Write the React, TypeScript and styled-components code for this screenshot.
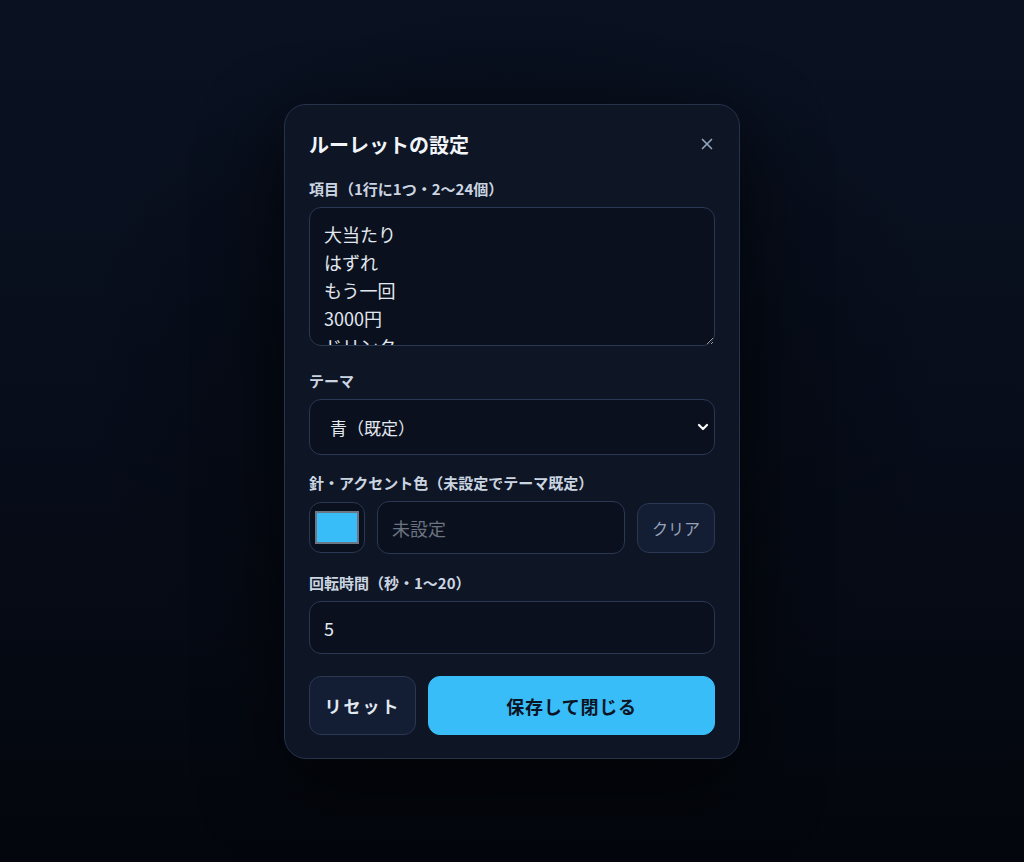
import React, { useState } from 'react';
import styled, { createGlobalStyle } from 'styled-components';
import { X, ChevronDown } from 'lucide-react';

const fontStack = `"Noto Sans CJK JP", "Noto Sans", sans-serif`;

const GlobalStyle = createGlobalStyle`
  html, body {
    margin: 0;
    padding: 0;
    height: 100%;
  }
  body {
    background: #050a14;
    font-family: ${fontStack};
    color: #e2e8f0;
  }
  * {
    text-spacing-trim: space-all;
  }
  #root {
    min-height: 100%;
  }
`;

const Backdrop = styled.div`
  min-height: 862px;
  display: flex;
  justify-content: center;
  align-items: flex-start;
  padding-top: 104px;
  box-sizing: border-box;
  background:
    radial-gradient(ellipse at 50% 45%, rgba(3, 6, 12, 0.9) 0%, rgba(3, 6, 12, 0) 60%),
    linear-gradient(180deg, #0a1222 0%, #070d1a 50%, #03060c 100%);
`;

const Dialog = styled.div`
  width: 456px;
  box-sizing: border-box;
  padding: 22px 24px 23px;
  background: #0e1525;
  border: 1px solid #26334b;
  border-radius: 22px;
  box-shadow: 0 30px 80px rgba(0, 0, 0, 0.65);
`;

const Header = styled.div`
  display: flex;
  align-items: center;
  justify-content: space-between;
  height: 34px;
  margin-bottom: 18px;
`;

const Title = styled.h2`
  margin: 0;
  font-size: 20px;
  font-weight: 700;
  color: #f1f5f9;
`;

const CloseButton = styled.button`
  width: 32px;
  height: 32px;
  margin-right: -8px;
  display: flex;
  align-items: center;
  justify-content: center;
  background: none;
  border: none;
  color: #94a3b8;
  cursor: pointer;
  padding: 0;
`;

const Field = styled.div<{ $gap?: number }>`
  display: flex;
  flex-direction: column;
  gap: 8px;
  margin-bottom: ${(p) => p.$gap ?? 20}px;
`;

const Label = styled.label`
  font-size: 15px;
  line-height: 20px;
  font-weight: 600;
  color: #cbd5e1;
`;

const controlBase = `
  box-sizing: border-box;
  width: 100%;
  background: #0a101d;
  border: 1px solid #2a3853;
  border-radius: 12px;
  color: #e2e8f0;
  font-family: ${fontStack};
  outline: none;
`;

const TextArea = styled.textarea`
  ${controlBase}
  display: block;
  height: 139px;
  padding: 12px 14px;
  font-size: 18px;
  line-height: 28px;
  resize: vertical;
  overflow: hidden;
  margin-bottom: 5px;
`;

const SelectWrap = styled.div`
  position: relative;
`;

const Select = styled.select`
  ${controlBase}
  appearance: none;
  height: 56px;
  padding: 0 20px;
  font-size: 17px;
`;

const Chevron = styled(ChevronDown)`
  position: absolute;
  right: 4px;
  top: 50%;
  transform: translateY(-50%);
  color: #f8fafc;
  pointer-events: none;
`;

const ColorRow = styled.div`
  display: flex;
  align-items: center;
  gap: 12px;
`;

const Swatch = styled.button`
  flex: none;
  width: 56px;
  height: 51px;
  display: flex;
  align-items: center;
  justify-content: center;
  background: #0a101d;
  border: 1px solid #2a3853;
  border-radius: 12px;
  padding: 0;
  cursor: pointer;
`;

const SwatchFill = styled.span<{ $color: string }>`
  width: 44px;
  height: 33px;
  box-sizing: border-box;
  background: ${(p) => p.$color};
  border: 2px solid #6b7785;
`;

const TextInput = styled.input`
  ${controlBase}
  height: 53px;
  padding: 0 14px;
  font-size: 18px;

  &::placeholder {
    color: #6b7280;
  }
`;

const ClearButton = styled.button`
  flex: none;
  width: 78px;
  height: 50px;
  background: #131d33;
  border: 1px solid #2a3853;
  border-radius: 12px;
  color: #94a3b8;
  font-family: inherit;
  font-size: 16px;
  cursor: pointer;
`;

const Actions = styled.div`
  display: flex;
  gap: 12px;
  margin-top: 22px;
`;

const ActionButton = styled.button<{ $primary?: boolean }>`
  height: 59px;
  border-radius: 12px;
  font-family: inherit;
  font-size: ${(p) => (p.$primary ? '18px' : '17px')};
  font-weight: 700;
  letter-spacing: ${(p) => (p.$primary ? '0.04em' : '0.12em')};
  cursor: pointer;
  flex: ${(p) => (p.$primary ? '1' : 'none')};
  width: ${(p) => (p.$primary ? 'auto' : '107px')};
  background: ${(p) => (p.$primary ? '#38bdf8' : '#131d33')};
  color: ${(p) => (p.$primary ? '#0b1424' : '#e2e8f0')};
  border: 1px solid ${(p) => (p.$primary ? '#38bdf8' : '#2a3853')};
`;

const defaultItems = ['大当たり', 'はずれ', 'もう一回', '3000円', 'ドリンク', 'おかし'].join('\n');

export default function App() {
  const [items, setItems] = useState(defaultItems);
  const [accent, setAccent] = useState('');
  const [seconds, setSeconds] = useState('5');

  return (
    <>
      <GlobalStyle />
      <Backdrop>
        <Dialog role="dialog" aria-label="ルーレットの設定">
          <Header>
            <Title>ルーレットの設定</Title>
            <CloseButton aria-label="閉じる">
              <X size={18} strokeWidth={2.2} />
            </CloseButton>
          </Header>

          <Field>
            <Label>項目（1行に1つ・2〜24個）</Label>
            <TextArea value={items} onChange={(e) => setItems(e.target.value)} />
          </Field>

          <Field $gap={18}>
            <Label>テーマ</Label>
            <SelectWrap>
              <Select defaultValue="blue">
                <option value="blue">青（既定）</option>
                <option value="red">赤</option>
                <option value="green">緑</option>
              </Select>
              <Chevron size={16} strokeWidth={3.4} />
            </SelectWrap>
          </Field>

          <Field $gap={19}>
            <Label>針・アクセント色（未設定でテーマ既定）</Label>
            <ColorRow>
              <Swatch aria-label="色を選ぶ">
                <SwatchFill $color="#38bdf8" />
              </Swatch>
              <TextInput
                placeholder="未設定"
                value={accent}
                onChange={(e) => setAccent(e.target.value)}
              />
              <ClearButton onClick={() => setAccent('')}>クリア</ClearButton>
            </ColorRow>
          </Field>

          <Field $gap={0}>
            <Label>回転時間（秒・1〜20）</Label>
            <TextInput value={seconds} onChange={(e) => setSeconds(e.target.value)} />
          </Field>

          <Actions>
            <ActionButton>リセット</ActionButton>
            <ActionButton $primary>保存して閉じる</ActionButton>
          </Actions>
        </Dialog>
      </Backdrop>
    </>
  );
}
